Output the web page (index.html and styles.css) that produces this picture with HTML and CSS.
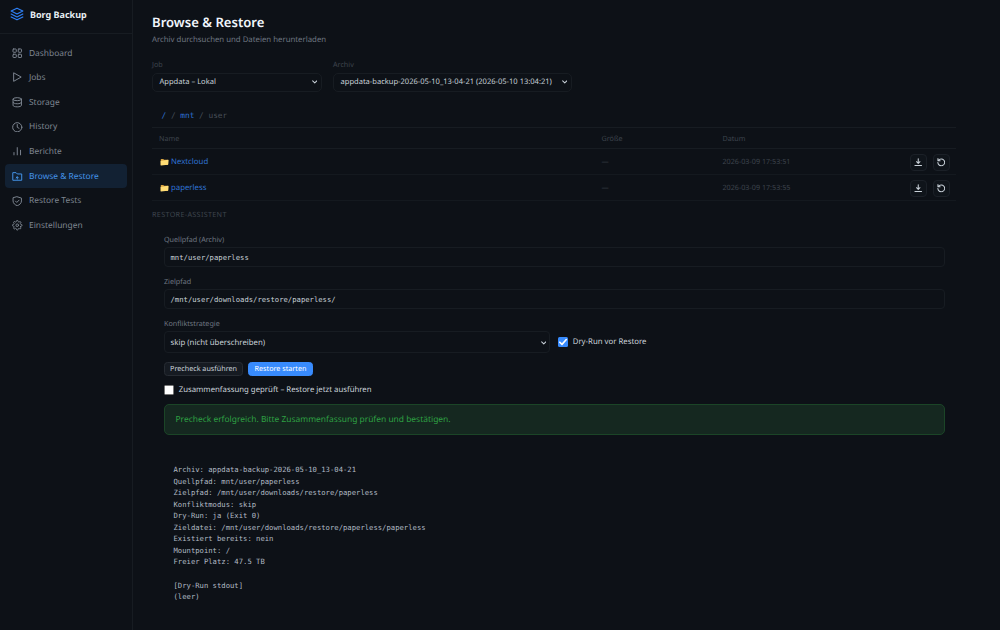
FILE: index.html
```html
<!DOCTYPE html>
<html lang="de">
<head>
<meta charset="utf-8">
<title>Borg Backup – Browse &amp; Restore</title>
<link rel="stylesheet" href="styles.css">
</head>
<body>
<svg class="defs" aria-hidden="true">
  <symbol id="chevron" viewBox="0 0 6 4"><path d="M.7.7 3 3 5.3.7"/></symbol>
  <symbol id="folder" viewBox="0 0 18 16"><path d="M1.500 2.800q0-1 1-1h4.200l1.300 1.600H15q1 0 1 1V14H1.500z" fill="#d9a441"/><path d="M1.200 6.200 16 3.400q1.200-.2 1.200 1L16.600 12.600q0 .9-1 1.100L2.200 15.200q-.9 0-.9-.9z" fill="#ffdd76"/></symbol>
  <symbol id="download" viewBox="0 0 16 16"><path d="M8 1.500v8.500M4.800 7 8 10.200 11.200 7M1.800 14h12.400"/></symbol>
  <symbol id="restore" viewBox="0 0 16 16"><path d="M2.600 4.800A6.400 6.400 0 1 1 1.600 8.500M1.800 1.200v4h4"/></symbol>
</svg>
<div class="app">
  <aside class="sidebar">
    <div class="brand">
      <svg class="logo" viewBox="0 0 24 24"><path d="M12 2 2 7l10 5 10-5zM2 12l10 5 10-5M2 17l10 5 10-5"/></svg>
      <span>Borg Backup</span>
    </div>
    <nav class="nav">
      <a class="nav-item"><svg class="icon" viewBox="0 0 16 16"><rect x="1.5" y="1.5" width="5" height="5" rx="1"/><rect x="9.5" y="1.5" width="5" height="5" rx="1"/><rect x="1.5" y="9.5" width="5" height="5" rx="1"/><rect x="9.5" y="9.5" width="5" height="5" rx="1"/></svg>Dashboard</a>
      <a class="nav-item"><svg class="icon" viewBox="0 0 16 16"><path d="M2.5 1.8v12.4L13.5 8z"/></svg>Jobs</a>
      <a class="nav-item"><svg class="icon" viewBox="0 0 16 16"><ellipse cx="8" cy="3.3" rx="6.4" ry="2.3"/><path d="M1.6 3.3v9.4c0 1.3 2.9 2.3 6.4 2.3s6.4-1 6.4-2.3V3.3M1.6 8c0 1.3 2.9 2.3 6.4 2.3s6.4-1 6.4-2.3"/></svg>Storage</a>
      <a class="nav-item"><svg class="icon" viewBox="0 0 16 16"><circle cx="8" cy="8" r="7"/><path d="M8 3.8V8l2.7 1.6"/></svg>History</a>
      <a class="nav-item"><svg class="icon" viewBox="0 0 16 16"><path d="M3 13.5V10M8 13.5v-11M13 13.5V6.5"/></svg>Berichte</a>
      <a class="nav-item active"><svg class="icon" viewBox="0 0 16 16"><path d="M1.2 13.5V2.5h5L8 4.5h6.800v9zM8 9v3.200M6.300 10.500l1.700-1.700 1.700 1.700"/></svg>Browse &amp; Restore</a>
      <a class="nav-item"><svg class="icon" viewBox="0 0 16 16"><path d="M8 1.2 14.4 3.200v4.300c0 3.700-3 6-6.400 7.300-3.400-1.300-6.400-3.600-6.400-7.300V3.200zM5.300 7.800l2 2 3.500-3.500"/></svg>Restore Tests</a>
      <a class="nav-item"><svg class="icon gear" viewBox="0 0 24 24"><circle cx="12" cy="12" r="3"/><path d="M19.400 15a1.650 1.650 0 0 0 .33 1.820l.06.06a2 2 0 1 1-2.830 2.830l-.06-.06a1.650 1.650 0 0 0-2.800 1.170V21a2 2 0 0 1-4 0v-.09a1.650 1.650 0 0 0-2.900-1.260l-.06.06a2 2 0 1 1-2.830-2.830l.06-.06A1.650 1.650 0 0 0 3.090 14H3a2 2 0 0 1 0-4h.09a1.650 1.650 0 0 0 1.260-2.900l-.06-.06a2 2 0 1 1 2.830-2.830l.06.06A1.650 1.650 0 0 0 10 3.090V3a2 2 0 0 1 4 0v.09a1.650 1.650 0 0 0 2.820 1.180l.06-.06a2 2 0 1 1 2.830 2.830l-.06.06A1.650 1.650 0 0 0 20.910 10H21a2 2 0 0 1 0 4h-.09a1.650 1.650 0 0 0-1.510 1z"/></svg>Einstellungen</a>
    </nav>
  </aside>
  <main class="main">
    <h1>Browse &amp; Restore</h1>
    <p class="subtitle">Archiv durchsuchen und Dateien herunterladen</p>
    <div class="filters">
      <div class="filter job"><span class="label">Job</span><div class="select">Appdata – Lokal<svg class="chev"><use href="#chevron"/></svg></div></div>
      <div class="filter archive"><span class="label">Archiv</span><div class="select">appdata-backup-2026-05-10_13-04-21 (2026-05-10 13:04:21)<svg class="chev"><use href="#chevron"/></svg></div></div>
    </div>
    <div class="crumbs"><a>/</a> / <a>mnt</a> / user</div>
    <div class="table">
      <div class="row head"><span>Name</span><span>Größe</span><span>Datum</span><span></span></div>
      <div class="row"><span class="name"><svg class="folder"><use href="#folder"/></svg>Nextcloud</span><span>—</span><span>2026-03-09 17:53:51</span><span class="actions"><button class="tool"><svg><use href="#download"/></svg></button><button class="tool"><svg><use href="#restore"/></svg></button></span></div>
      <div class="row"><span class="name"><svg class="folder"><use href="#folder"/></svg>paperless</span><span>—</span><span>2026-03-09 17:53:55</span><span class="actions"><button class="tool"><svg><use href="#download"/></svg></button><button class="tool"><svg><use href="#restore"/></svg></button></span></div>
    </div>
    <h2>RESTORE-ASSISTENT</h2>
    <section class="assistant">
      <div class="field"><span class="caption">Quellpfad (Archiv)</span><div class="input">mnt/user/paperless</div></div>
      <div class="field"><span class="caption">Zielpfad</span><div class="input">/mnt/user/downloads/restore/paperless/</div></div>
      <div class="field last"><span class="caption">Konfliktstrategie</span>
        <div class="strategy"><div class="input choice">skip (nicht überschreiben)<svg class="chev"><use href="#chevron"/></svg></div>
        <div class="check"><span class="box checked"><svg viewBox="0 0 10 10"><path d="M1.800 5.200 4 7.400 8.300 2.500"/></svg></span>Dry-Run vor Restore</div></div>
      </div>
      <div class="buttons"><button class="btn">Precheck ausführen</button><button class="btn primary">Restore starten</button></div>
      <div class="check confirm"><span class="box"></span>Zusammenfassung geprüft – Restore jetzt ausführen</div>
      <div class="alert">Precheck erfolgreich. Bitte Zusammenfassung prüfen und bestätigen.</div>
      <pre class="log">Archiv: appdata-backup-2026-05-10_13-04-21
Quellpfad: mnt/user/paperless
Zielpfad: /mnt/user/downloads/restore/paperless
Konfliktmodus: skip
Dry-Run: ja (Exit 0)
Zieldatei: /mnt/user/downloads/restore/paperless/paperless
Existiert bereits: nein
Mountpoint: /
Freier Platz: 47.5 TB

[Dry-Run stdout]
(leer)</pre>
    </section>
  </main>
</div>
</body>
</html>
```
FILE: styles.css
```css
* { box-sizing: border-box; }
body { margin: 0; background: #0d1117; color: #c9d1d9; font-family: "Noto Sans", sans-serif; font-size: 7.8px; white-space: nowrap; text-rendering: geometricPrecision; overflow: hidden; }
button { font: inherit; color: inherit; padding: 0; text-rendering: inherit; }
svg { fill: none; stroke: currentColor; stroke-linecap: round; stroke-linejoin: round; flex: none; }
.defs { display: none; }
.app { display: flex; height: 630px; overflow: hidden; }
.sidebar { width: 133px; flex: none; border-right: 1px solid #171c22; }
.brand { height: 34px; padding: 0 0 5px 10px; border-bottom: 1px solid #171c22; display: flex; align-items: center; gap: 6px; font-size: 9px; font-weight: 700; color: #e6edf3; }
.logo { width: 14px; height: 14px; color: #2f81f7; stroke-width: 2; }
.nav { padding: 7px 5px 0 4.700px; display: flex; flex-direction: column; gap: .65px; }
.nav-item { height: 24px; padding-left: 7.500px; display: flex; align-items: center; gap: 6.300px; border-radius: 4px; font-size: 8.420px; color: #7d8590; }
.nav-item.active { background: #122133; color: #4493e8; }
.icon { width: 10.500px; height: 10.500px; stroke-width: 1.500; }
.icon.gear { stroke-width: 2.200; }
.main { flex: 1; padding: 14px 44px 0 19px; }
h1 { margin: 0; height: 16px; line-height: 16px; font-size: 13.100px; font-weight: 600; color: #f0f6fc; }
.subtitle { margin: 3.600px 0 0; height: 12px; line-height: 12px; color: #6e7681; }
.filters { display: flex; gap: 11px; margin-top: 13px; }
.filter.job { width: 170px; }
.filter.archive { width: 239px; }
.label { display: block; height: 12px; line-height: 12px; font-size: 7.200px; color: #3d444d; }
.select { height: 19px; margin-top: 2.400px; padding: 0 4px 0 6.500px; border: 1px solid #171c22; border-radius: 5px; display: flex; align-items: center; justify-content: space-between; font-size: 7.550px; }
.chev { width: 5.500px; height: 4px; stroke-width: 1.100; }
.crumbs { height: 24px; line-height: 24px; margin-top: 12.500px; padding-left: 9.500px; font-family: "DejaVu Sans Mono", monospace; color: #484f58; }
.crumbs a { color: #2f73d5; }
.table { border-top: 1px solid #171c22; margin-top: -1.500px; width: 804px; }
.row { display: grid; grid-template-columns: 442.500px 121px 1fr auto; align-items: center; height: 26px; padding: 1px 6.500px 0 7px; border-bottom: 1px solid #14191f; font-size: 7.200px; color: #3d444d; }
.row.head { height: 21.500px; border-color: #171c22; }
.name { display: flex; align-items: center; gap: 2.500px; font-size: 7.800px; color: #2f73d5; }
.folder { width: 9px; height: 8px; stroke: none; margin-left: .5px; }
.actions { display: flex; gap: 5.500px; }
.tool { width: 17px; height: 17px; border: 1px solid #1b2027; border-radius: 4px; background: #0f141a; color: #c9d1d9; display: flex; align-items: center; justify-content: center; }
.tool svg { width: 8.500px; height: 8.500px; stroke-width: 2; }
h2 { margin: 7.100px 0 0; height: 12px; line-height: 12px; font-size: 7.200px; font-weight: 400; letter-spacing: .34px; color: #3d444d; }
.assistant { width: 781px; margin-left: 12px; padding-top: 13px; }
.field { height: 42px; }
.field.last { height: 44.500px; }
.caption { display: block; height: 12px; line-height: 12px; font-size: 7.200px; color: #6e7681; }
.input { height: 20px; margin-top: 1.500px; border: 1px solid #171c22; border-radius: 4px; padding: 1px 5.500px 0; display: flex; align-items: center; font-family: "DejaVu Sans Mono", monospace; font-size: 7.225px; }
.strategy { display: flex; gap: 8px; align-items: center; }
.choice { width: 386px; height: 22px; padding-right: 3px; justify-content: space-between; font-family: inherit; font-size: 7.800px; }
.check { display: flex; align-items: center; gap: 4.700px; }
.strategy .check { padding-top: 1.500px; }
.box { width: 10px; height: 10px; background: #fff; border: 1px solid #767676; border-radius: 1.500px; }
.box.checked { background: #388bfd; border: 0; color: #fff; display: flex; }
.box svg { width: 10px; height: 10px; stroke-width: 1.600; }
.buttons { display: flex; gap: 5px; }
.btn { height: 14px; width: 79px; border: 1px solid #272c33; border-radius: 3.500px; background: #161b22; font-size: 7.200px; line-height: 12px; }
.primary { width: 65px; background: #388bfd; border-color: #388bfd; color: #fff; }
.confirm { height: 12px; margin-top: 8px; }
.alert { height: 31px; margin-top: 8px; padding-left: 10.500px; border: 1px solid #1b4527; border-radius: 5px; background: #152820; color: #2ea043; display: flex; align-items: center; font-size: 8.430px; }
.log { margin: 29px 0 0 9.500px; font: 7.225px/11.550px "DejaVu Sans Mono", monospace; color: #b1bac4; }
```
